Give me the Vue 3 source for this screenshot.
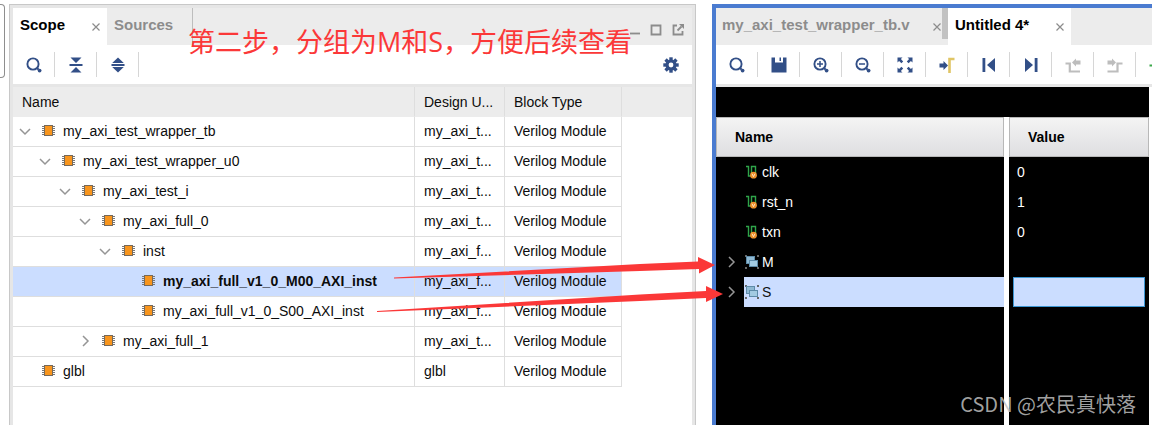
<script setup>
const scopeRows = [
  { name: 'my_axi_test_wrapper_tb', depth: 0, state: 'open', unit: 'my_axi_t...' },
  { name: 'my_axi_test_wrapper_u0', depth: 1, state: 'open', unit: 'my_axi_t...' },
  { name: 'my_axi_test_i', depth: 2, state: 'open', unit: 'my_axi_t...' },
  { name: 'my_axi_full_0', depth: 3, state: 'open', unit: 'my_axi_t...' },
  { name: 'inst', depth: 4, state: 'open', unit: 'my_axi_f...' },
  { name: 'my_axi_full_v1_0_M00_AXI_inst', depth: 5, state: '', unit: 'my_axi_f...', selected: true },
  { name: 'my_axi_full_v1_0_S00_AXI_inst', depth: 5, state: '', unit: 'my_axi_f...' },
  { name: 'my_axi_full_1', depth: 3, state: 'closed', unit: 'my_axi_t...' },
  { name: 'glbl', depth: 0, state: '', unit: 'glbl' }
]

const signals = [
  { name: 'clk', value: '0' },
  { name: 'rst_n', value: '1' },
  { name: 'txn', value: '0' },
  { name: 'M', value: '', group: true },
  { name: 'S', value: '', group: true, selected: true }
]

const lens = '<circle cx="7" cy="7" r="5.600" fill="none" stroke="currentColor" stroke-width="1.900"/><path d="M11 11l1.500 1.500" stroke="currentColor" stroke-width="2" fill="none"/><circle cx="13.600" cy="13.600" r="1.900" fill="currentColor"/>'
const icons = {
  search: lens,
  collapse: '<path d="M2.500 0.500h11L8 6zM2.500 15.500h11L8 10zM1.500 7h13v2h-13z" fill="currentColor"/>',
  expand: '<path d="M8 0.500l5.800 5.500H2.200zM8 15.500l5.800-5.500H2.200zM1.500 7h13v2h-13z" fill="currentColor"/>',
  save: '<path d="M0.500 0.500H4v5h8v-5h3.500v15h-15z" fill="currentColor"/><path d="M8.500 0.500h1.500v3.500H8.500z" fill="currentColor"/>',
  zoomIn: lens + '<path d="M4 7h6M7 4v6" stroke="currentColor" stroke-width="1.500"/>',
  zoomOut: lens + '<path d="M4 7h6" stroke="currentColor" stroke-width="1.500"/>',
  fit: '<path d="M0.500 0.500h5L3.900 2.100l2.300 2.300-1.800 1.800-2.300-2.300L0.500 5.500zM15.500 0.500v5l-1.600-1.600-2.300 2.300-1.800-1.800 2.300-2.300L10.500 0.500zM0.500 15.500v-5l1.600 1.600 2.300-2.300 1.800 1.800-2.300 2.300 1.600 1.600zM15.500 15.500h-5l1.600-1.600-2.300-2.300 1.800-1.800 2.300 2.300 1.600-1.600z" fill="currentColor"/>',
  cursor: '<path d="M0.500 6.500h4V4L9 8.500 4.500 13v-2.500h-4z" fill="currentColor"/><path d="M10.500 16V2H15.500" fill="none" stroke="#e0c565" stroke-width="2.600"/>',
  first: '<path d="M1.500 1h2.800v14H1.500zM14 1v14L6 8z" fill="currentColor"/>',
  last: '<path d="M11.700 1h2.800v14h-2.800zM2 1v14l8-7z" fill="currentColor"/>',
  prevEdge: '<path d="M0.500 6.500h4.300v8h10.200" fill="none" stroke="currentColor" stroke-width="2.200"/><path d="M7 5.500l4-4v2h4.500v4H11v2z" fill="currentColor"/>',
  nextEdge: '<path d="M0.500 14.500h10v-8h5" fill="none" stroke="currentColor" stroke-width="2.200"/><path d="M9 5.500l-4-4v2H0.500v4H5v2z" fill="currentColor"/>',
  add: '<path d="M0.500 8.500h10M5 4v9" stroke="#3ba84a" stroke-width="2.200" fill="none"/>'
}

const scopeTools = [
  { id: 'search', label: 'Search' },
  { id: 'collapse', label: 'Collapse all' },
  { id: 'expand', label: 'Expand all' }
]
const waveTools = [
  { id: 'search', label: 'Search' },
  { id: 'save', label: 'Save' },
  { id: 'zoomIn', label: 'Zoom in' },
  { id: 'zoomOut', label: 'Zoom out' },
  { id: 'fit', label: 'Zoom fit' },
  { id: 'cursor', label: 'Go to cursor' },
  { id: 'first', label: 'Go to start' },
  { id: 'last', label: 'Go to end' },
  { id: 'prevEdge', label: 'Previous transition', disabled: true },
  { id: 'nextEdge', label: 'Next transition', disabled: true },
  { id: 'add', label: 'Add marker' }
]
</script>

<template>
  <main class="workspace">
    <div class="edge"><div class="edge-box"></div></div>

    <section class="panel scope" aria-label="Scope">
      <div class="tabs">
        <div class="tab active scope-tab">
          <button class="tab-name">Scope</button>
          <button class="close" aria-label="Close Scope"><svg viewBox="0 0 8 8"><path d="M.5.5l7 7M7.500.5l-7 7" /></svg></button>
        </div>
        <div class="tab sources-tab"><button class="tab-name">Sources</button></div>
        <div class="window-tools">
          <button aria-label="Minimize"><svg viewBox="0 0 12 12"><path d="M2 9.500h10" /></svg></button>
          <button aria-label="Maximize"><svg viewBox="0 0 12 12"><path d="M1.500 1.500h9v9h-9z" /></svg></button>
          <button aria-label="Float"><svg viewBox="0 0 12 12"><path d="M5 1.500H1.500v9h9V7M5.500 6.500l4-4" /><path class="solid" d="M7 0h5v5z" /></svg></button>
        </div>
      </div>
      <div class="toolbar">
        <button v-for="t in scopeTools" :key="t.id" class="tool" :aria-label="t.label">
          <svg viewBox="0 0 16 16" v-html="icons[t.id]"></svg>
        </button>
        <button class="settings" aria-label="Settings">
          <svg viewBox="0 0 16 16">
            <g fill="currentColor">
              <rect v-for="a in [0, 45, 90, 135]" :key="a" x="6.300" y="0.300" width="3.400" height="15.400" :transform="`rotate(${a} 8 8)`" />
              <circle cx="8" cy="8" r="5.500" />
            </g>
            <circle cx="8" cy="8" r="2.400" fill="#fff" />
          </svg>
        </button>
      </div>
      <table class="tree">
        <colgroup><col /><col class="unit-col" /><col class="type-col" /><col class="rest-col" /></colgroup>
        <thead>
          <tr><th>Name</th><th>Design U...</th><th>Block Type</th><td></td></tr>
        </thead>
        <tbody>
          <tr v-for="row in scopeRows" :key="row.name" :class="{ selected: row.selected }">
            <td>
              <div class="node" :style="{ paddingLeft: `${row.depth * 20}px` }">
                <span class="twist">
                  <svg v-if="row.state" viewBox="0 0 12 12">
                    <path :d="row.state === 'open' ? 'M1 4l5 5 5-5' : 'M4 1l5 5-5 5'" />
                  </svg>
                </span>
                <svg class="chip" viewBox="0 0 13 13">
                  <path d="M0 2.500h13M0 4.500h13M0 6.500h13M0 8.500h13M0 10.500h13" stroke="#777" />
                  <rect x="2.500" y="1.500" width="8" height="10" fill="#f8951d" stroke="#76695a" />
                </svg>
                <span>{{ row.name }}</span>
              </div>
            </td>
            <td>{{ row.unit }}</td>
            <td>Verilog Module</td>
            <td class="rest"></td>
          </tr>
        </tbody>
      </table>
    </section>

    <section class="panel wave" aria-label="Waveform">
      <div class="tabs">
        <div class="tab file-tab">
          <button class="tab-name">my_axi_test_wrapper_tb.v</button>
          <button class="close" aria-label="Close my_axi_test_wrapper_tb.v"><svg viewBox="0 0 8 8"><path d="M.5.5l7 7M7.500.5l-7 7" /></svg></button>
        </div>
        <div class="tab active wave-tab">
          <button class="tab-name">Untitled 4*</button>
          <button class="close" aria-label="Close Untitled 4"><svg viewBox="0 0 8 8"><path d="M.5.5l7 7M7.500.5l-7 7" /></svg></button>
        </div>
      </div>
      <div class="toolbar">
        <button v-for="t in waveTools" :key="t.id" class="tool" :aria-label="t.label" :disabled="t.disabled">
          <svg viewBox="0 0 16 16" v-html="icons[t.id]"></svg>
        </button>
      </div>
      <div class="wave-body">
        <table class="signals">
          <colgroup><col /><col class="split-col" /><col class="value-col" /></colgroup>
          <thead>
            <tr><th>Name</th><td class="split"></td><th class="value-head">Value</th></tr>
          </thead>
          <tbody>
            <tr v-for="s in signals" :key="s.name" class="signal" :class="{ selected: s.selected }">
              <td>
                <div class="signal-row">
                  <span class="signal-twist">
                    <svg v-if="s.group" viewBox="0 0 12 12"><path d="M3 1l5 5-5 5" /></svg>
                  </span>
                  <div class="signal-name">
                    <svg v-if="s.group" viewBox="0 0 14 14">
                      <path d="M0 0h2v2H0zM12 0h2v2h-2zM0 12h2v2H0zM12 12h2v2h-2z" fill="#666" />
                      <rect x="1.500" y="1.500" width="8" height="7" fill="#8fb9d3" stroke="#5e8ba8" />
                      <rect x="4.500" y="5.500" width="8" height="6" fill="#a3cbe2" stroke="#5e8ba8" />
                    </svg>
                    <svg v-else viewBox="0 0 14 14">
                      <path d="M1 1.500h2.500v9.500h3M6.500 11V1.500h4V8" fill="none" stroke="#2fa54a" stroke-width="1.400" />
                      <circle cx="8.500" cy="10.200" r="3.400" fill="#f0922b" />
                      <path d="M7 8.700L8.500 11.700l1.500-3" fill="none" stroke="#ffe6c4" />
                    </svg>
                    <span>{{ s.name }}</span>
                  </div>
                </div>
              </td>
              <td class="split"></td>
              <td><div class="value">{{ s.value }}</div></td>
            </tr>
            <tr class="filler"><td></td><td class="split"></td><td></td></tr>
          </tbody>
        </table>
      </div>
    </section>

    <svg class="arrows" width="730" height="320" viewBox="0 0 730 320" aria-hidden="true">
      <path d="M394 277.500L640 264l58-2.500V257l17 8-16 8.500V269l-59 2-246 7.500z" />
      <path d="M377 311L640 294.500l66-3.500v-5l17 8-17 8v-4l-66 3-263 11z" />
    </svg>
    <p class="note">第二步，分组为M和S，方便后续查看</p>
    <p class="watermark">CSDN @农民真快落</p>
  </main>
</template>

<style>
body {
  margin: 0;
  background: #fff;
}
</style>

<style scoped>
.workspace {
  position: relative;
  display: flex;
  min-height: 100vh;
  box-sizing: border-box;
  padding-top: 4px;
  overflow: hidden;
  color: #0c0c0c;
  font: 14px/20px "Liberation Sans", Arial, "Noto Sans CJK SC", sans-serif;
}
button {
  border: 0;
  padding: 0;
  background: none;
  font: inherit;
  color: inherit;
}
svg {
  display: block;
}
.edge {
  flex: none;
  width: 9px;
}
.edge-box {
  width: 4px;
  height: 72px;
  border: 1px solid #8e8e8e;
  border-left: 0;
  border-radius: 0 4px 4px 0;
}
.panel {
  box-sizing: border-box;
  min-width: 0;
  display: flex;
  flex-direction: column;
}
.scope {
  flex: 679 1 0;
  margin-right: 16px;
  border: 1px solid #c8c8c8;
  border-bottom: 0;
  background: #fff;
  box-shadow: inset 3px 0 #e6e6e6, inset -3px 0 #e6e6e6;
  padding: 0 3px;
}
.wave {
  flex: 436 1 0;
  border: solid #4a7bd0;
  border-width: 4px 0 0 4px;
}
.tabs {
  display: flex;
  height: 37px;
  background: #ececec;
  font-size: 15px;
  font-weight: bold;
  color: #8c8c8c;
}
.scope .tabs {
  border-top: 3px solid #e6e6e6;
}
.tab {
  display: flex;
  justify-content: space-between;
  align-items: center;
  box-sizing: border-box;
  padding: 0 7px 4px;
}
.tab.active {
  background: #fff;
  color: #000;
}
.scope-tab {
  width: 94px;
}
.sources-tab {
  width: 86px;
  border-right: 1px solid #bdbdbd;
}
.file-tab {
  width: 232px;
  padding: 0 7px 4px 6px;
  position: relative;
}
.file-tab::after {
  content: "";
  position: absolute;
  top: 0;
  right: 0;
  width: 6px;
  height: 31px;
  background: #c2c2c2;
}
.wave-tab {
  width: 123px;
}
.close {
  padding-top: 5px;
}
.close svg {
  width: 8px;
  height: 8px;
  fill: none;
  stroke: #8c8c8c;
  stroke-width: 1.2;
}
.window-tools {
  display: flex;
  align-items: center;
  gap: 10px;
  margin-left: auto;
  padding: 6px 8px 0 0;
}
.window-tools svg {
  width: 12px;
  height: 12px;
  fill: none;
  stroke: #8c8c8c;
  stroke-width: 1.8;
}
.window-tools .solid {
  fill: #8c8c8c;
  stroke: none;
}
.toolbar {
  display: flex;
  align-items: center;
  height: 39px;
  border-bottom: 3px solid #e6e6e6;
  overflow: hidden;
  background: #fff;
  color: #324f87;
}
.tool {
  flex: none;
  box-sizing: border-box;
  display: grid;
  place-items: center;
  width: 42px;
  height: 25px;
  border-right: 1px solid #d6d6d6;
}
.tool:disabled {
  color: #bdbdbd;
}
.tool svg,
.settings svg {
  width: 16px;
  height: 16px;
}
.settings {
  margin-left: auto;
  padding-right: 13px;
}
table {
  width: 100%;
  table-layout: fixed;
  border-collapse: separate;
  border-spacing: 0;
}
th,
td {
  padding: 0;
  text-align: left;
}
.unit-col {
  width: 90px;
}
.type-col {
  width: 117px;
}
.rest-col {
  width: 70px;
}
.tree th,
.tree td {
  box-sizing: border-box;
  height: 30px;
  padding-left: 9px;
  border-right: 1px solid #dedede;
  border-bottom: 1px solid #dedede;
  white-space: nowrap;
}
.tree tbody td {
  padding-bottom: 2px;
}
.tree thead th,
.tree thead td {
  background: #ececec;
  border-bottom-color: #ececec;
  font-weight: normal;
}
.tree thead td,
.tree tbody .rest {
  border-right: 0;
}
.tree tbody .rest {
  border-bottom: 0;
}
.tree tbody td:first-child {
  padding-left: 6px;
}
.tree .selected td:not(.rest) {
  background: #cbddff;
}
.tree .selected .node {
  font-weight: bold;
}
.node {
  display: flex;
  align-items: center;
}
.twist {
  width: 12px;
  margin-right: 11px;
}
.twist svg,
.signal-twist svg {
  width: 12px;
  height: 12px;
  fill: none;
  stroke: #959595;
  stroke-width: 1.5;
}
.chip {
  width: 13px;
  height: 13px;
  margin-right: 8px;
}
.wave-body {
  flex: 1;
  display: grid;
  margin-right: 3px;
  padding-top: 30px;
  background: #000;
  color: #fff;
}
.signals {
  height: 100%;
}
.split-col {
  width: 5px;
}
.value-col {
  width: 140px;
}
.split {
  background: #fff;
}
.signals th {
  box-sizing: border-box;
  height: 40px;
  padding-left: 18px;
  border: 1px solid #b8b8b8;
  background: linear-gradient(#f4f4f4, #dedee1);
  color: #000;
}
.signal {
  height: 30px;
}
.signal-row {
  display: flex;
  height: 30px;
}
.signal-twist {
  display: flex;
  align-items: center;
  width: 18px;
  padding-left: 10px;
}
.signal-name {
  flex: 1;
  display: flex;
  align-items: center;
  gap: 3px;
  padding-left: 1px;
}
.signal-name svg {
  width: 14px;
  height: 14px;
}
.selected .signal-name {
  background: #cbddff;
  color: #111;
}
.value {
  box-sizing: border-box;
  height: 30px;
  margin: 0 4px;
  padding-left: 3px;
  border: 1px solid transparent;
  line-height: 28px;
}
.selected .value {
  border-color: #3c96d2;
  background: #cbddff;
}
.arrows {
  position: absolute;
  top: 0;
  left: 0;
  fill: #fb3838;
  pointer-events: none;
}
.note {
  position: absolute;
  top: 22px;
  left: 188px;
  margin: 0;
  color: #fb3838;
  font: 27px/40px "Open Sans", "Noto Sans CJK SC", sans-serif;
  white-space: nowrap;
}
.watermark {
  position: absolute;
  right: 16px;
  bottom: 7px;
  margin: 0;
  color: rgba(190, 190, 190, 0.85);
  font: 20px/28px "Noto Sans CJK SC", sans-serif;
  white-space: nowrap;
}
</style>
